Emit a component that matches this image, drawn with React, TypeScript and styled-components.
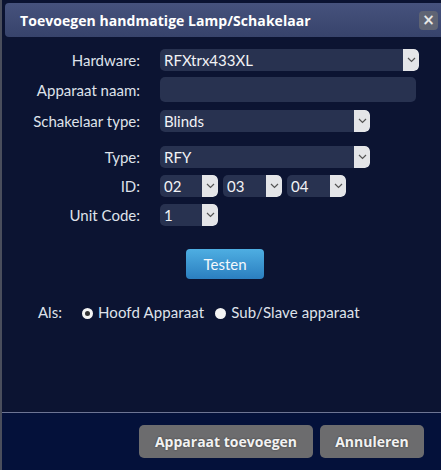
import React from "react";
import styled, { createGlobalStyle } from "styled-components";

const Global = createGlobalStyle`
  html, body { margin: 0; padding: 0; background: #0b1331; overflow: hidden; }
  * { box-sizing: border-box; }
`;

const Page = styled.div`
  width: 441px;
  height: 470px;
  background: #0b1331;
  border-left: 2px solid #4a4e5c;
  display: flex;
  flex-direction: column;
  font-family: Lato, "Noto Sans", sans-serif;
  color: #e6e8ee;
  overflow: hidden;
`;

const TitleBar = styled.div`
  margin: 3px -12px 0 3px;
  height: 34px;
  border-radius: 4px;
  background: linear-gradient(#46527c, #37436b);
  display: flex;
  align-items: center;
  padding: 0 15px 0 15px;
`;

const Title = styled.div`
  flex: 1;
  font-family: "Open Sans", sans-serif;
  font-weight: 700;
  font-size: 14px;
  color: #ffffff;
  letter-spacing: 0.05px;
`;

const CloseBtn = styled.div`
  width: 19px;
  height: 19px;
  border-radius: 4px;
  background: #5f6474;
  display: flex;
  align-items: center;
  justify-content: center;
  color: #e8e8e8;
  font-size: 15px;
  font-weight: 700;
  font-family: "DejaVu Sans", sans-serif;
  line-height: 1;
`;

const Body = styled.div`
  flex: 1;
  padding: 12px 0 0 2px;
  display: flex;
  flex-direction: column;
  background: #0c1432;
`;

const Row = styled.div<{ $mt?: number }>`
  display: grid;
  grid-template-columns: 136px auto;
  column-gap: 20px;
  align-items: center;
  margin-top: ${(p) => p.$mt ?? 0}px;
`;

const Label = styled.div`
  text-align: right;
  font-size: 15px;
  color: #dfe2ea;
`;

const Controls = styled.div`
  display: flex;
  gap: 5px;
`;

const SelectBox = styled.div<{ $w: number }>`
  width: ${(p) => p.$w}px;
  height: 22px;
  border-radius: 5px;
  background: #283250;
  display: flex;
  align-items: center;
  overflow: hidden;
`;

const SelectValue = styled.div`
  flex: 1;
  padding-left: 4px;
  font-size: 15px;
  color: #f2f3f6;
`;

const ArrowBox = styled.div`
  width: 16px;
  height: 100%;
  background: #e4e5e8;
  border-radius: 0 5px 5px 0;
  display: flex;
  align-items: center;
  justify-content: center;
`;

const Input = styled.div<{ $w: number }>`
  width: ${(p) => p.$w}px;
  height: 25px;
  border-radius: 5px;
  background: #283250;
`;

const TestRow = styled.div`
  display: flex;
  justify-content: center;
  margin-top: 23px;
  padding-left: 5px;
`;

const TestBtn = styled.div`
  width: 78px;
  height: 30px;
  border-radius: 4px;
  background: linear-gradient(#4eaee2, #2b7fc0);
  color: #f4f8fc;
  font-size: 15px;
  display: flex;
  align-items: center;
  justify-content: center;
`;

const AlsRow = styled.div`
  display: flex;
  align-items: center;
  margin-top: 24px;
  padding-left: 34px;
  font-size: 15px;
  color: #dfe2ea;
`;

const AlsLabel = styled.span`
  width: 44px;
`;

const RadioItem = styled.span`
  display: flex;
  align-items: center;
  gap: 5px;
  margin-right: 11px;
  letter-spacing: 0.1px;
`;

const Radio = styled.span<{ $checked?: boolean }>`
  width: 11px;
  height: 11px;
  border-radius: 50%;
  background: ${(p) => (p.$checked ? "#333" : "#f4f4f4")};
  border: ${(p) => (p.$checked ? "3px solid #f4f4f4" : "none")};
  margin-top: 2px;
`;

const Spacer = styled.div`
  flex: 1;
`;

const Footer = styled.div`
  height: 58px;
  border-top: 1px solid #6d7594;
  background: #04113a;
  display: flex;
  justify-content: flex-end;
  align-items: flex-start;
  gap: 7px;
  padding: 12px 17px 0 0;
`;

const FootBtn = styled.div<{ $w: number }>`
  width: ${(p) => p.$w}px;
  height: 33px;
  border-radius: 5px;
  background: #6c6c6e;
  color: #f2f2f2;
  font-family: "Open Sans", sans-serif;
  font-weight: 700;
  font-size: 14px;
  display: flex;
  align-items: center;
  justify-content: center;
  text-shadow: 0 0 2px rgba(0, 0, 0, 0.5);
`;

const Chevron = () => (
  <svg width="9" height="6" viewBox="0 0 9 6">
    <path d="M1 1 L4.5 4.5 L8 1" fill="none" stroke="#555" strokeWidth="1.2" />
  </svg>
);

const Select = ({ value, w }: { value: string; w: number }) => (
  <SelectBox $w={w}>
    <SelectValue>{value}</SelectValue>
    <ArrowBox>
      <Chevron />
    </ArrowBox>
  </SelectBox>
);

export default function App() {
  return (
    <>
      <Global />
      <Page>
        <TitleBar>
          <Title>Toevoegen handmatige Lamp/Schakelaar</Title>
          <CloseBtn>×</CloseBtn>
        </TitleBar>
        <Body>
          <Row>
            <Label>Hardware:</Label>
            <Select value="RFXtrx433XL" w={259} />
          </Row>
          <Row $mt={6}>
            <Label>Apparaat naam:</Label>
            <Input $w={256} />
          </Row>
          <Row $mt={8}>
            <Label>Schakelaar type:</Label>
            <Select value="Blinds" w={210} />
          </Row>
          <Row $mt={14}>
            <Label>Type:</Label>
            <Select value="RFY" w={210} />
          </Row>
          <Row $mt={7}>
            <Label>ID:</Label>
            <Controls>
              <Select value="02" w={58} />
              <Select value="03" w={59} />
              <Select value="04" w={59} />
            </Controls>
          </Row>
          <Row $mt={7}>
            <Label>Unit Code:</Label>
            <Select value="1" w={58} />
          </Row>
          <TestRow>
            <TestBtn>Testen</TestBtn>
          </TestRow>
          <AlsRow>
            <AlsLabel>Als:</AlsLabel>
            <RadioItem>
              <Radio $checked />
              Hoofd Apparaat
            </RadioItem>
            <RadioItem>
              <Radio />
              Sub/Slave apparaat
            </RadioItem>
          </AlsRow>
          <Spacer />
        </Body>
        <Footer>
          <FootBtn $w={174}>Apparaat toevoegen</FootBtn>
          <FootBtn $w={104}>Annuleren</FootBtn>
        </Footer>
      </Page>
    </>
  );
}
